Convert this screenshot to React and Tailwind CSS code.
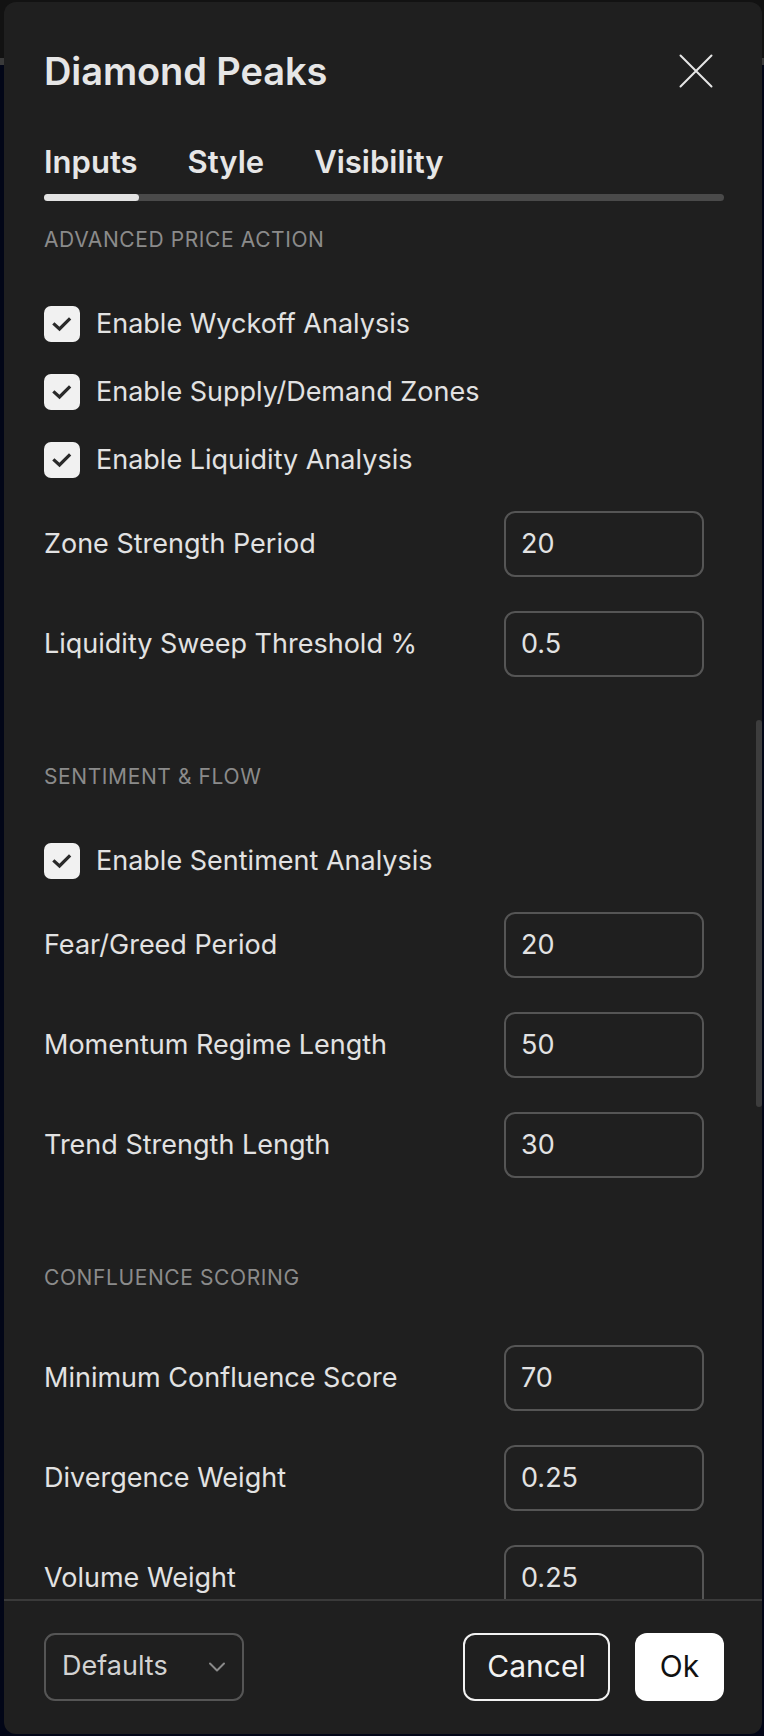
import React from "react";

function Check() {
  return (
    <div className="w-[36px] h-[36px] rounded-[7px] bg-[#f1f1f1] flex items-center justify-center shrink-0">
      <svg width="24" height="24" viewBox="0 0 24 24" fill="none">
        <path d="M4.5 12.5 L9.5 17 L19 7.5" stroke="#2a2a2a" strokeWidth="3.2" strokeLinecap="square" strokeLinejoin="miter" />
      </svg>
    </div>
  );
}

function CheckRow({ label }) {
  return (
    <div className="h-[68px] flex items-center gap-[16px]">
      <Check />
      <span className="text-[27px] text-[#e2e2e2]">{label}</span>
    </div>
  );
}

function InputRow({ label, value }) {
  return (
    <div className="h-[100px] flex items-center justify-between pr-[58px]">
      <span className="text-[27px] text-[#e2e2e2]">{label}</span>
      <div className="w-[200px] h-[66px] rounded-[11px] border-[2px] border-[#555555] flex items-center pl-[15px] text-[27px] text-[#e2e2e2]">
        {value}
      </div>
    </div>
  );
}

function Section({ title, first, children }) {
  return (
    <div className={first ? "" : "mt-[44px]"}>
      <div className="h-[77px] flex items-center text-[21px] text-[#8b8b8b] tracking-[0.6px]">{title}</div>
      <div className="mt-[12px]">{children}</div>
    </div>
  );
}

export default function App() {
  return (
    <div
      className="w-[764px] h-[1736px] pt-[2px] pl-[4px] pr-[2px] bg-[linear-gradient(to_bottom,#121212_0,#121212_58px,#3a3a3a_58px,#3a3a3a_65px,#020617_65px)] overflow-hidden"
      style={{ fontFamily: "Inter, 'Noto Sans', 'Liberation Sans', sans-serif" }}
    >
      <div className="relative h-[1732px] rounded-[12px] bg-[#1f1f1f] flex flex-col overflow-hidden">
        {/* Header */}
        <div className="pl-[40px] pr-[38px] pt-[45px]">
          <div className="h-[48px] flex items-center justify-between">
            <h1 className="text-[38px] font-semibold text-[#e6e6e6] tracking-[-0.1px]">Diamond Peaks</h1>
            <svg width="34" height="34" viewBox="0 0 34 34" fill="none" className="mr-[11px]">
              <path d="M1.5 1.5 L32.5 32.5 M32.5 1.5 L1.5 32.5" stroke="#e6e6e6" strokeWidth="2" strokeLinecap="round" />
            </svg>
          </div>
          <div className="mt-[47px] h-[40px] flex items-center gap-[50px] text-[31px] font-semibold text-[#e6e6e6]">
            <span>Inputs</span>
            <span>Style</span>
            <span>Visibility</span>
          </div>
          <div className="mt-[12px] h-[7px] rounded-full bg-[#4a4a4a] flex">
            <div className="w-[95px] h-[7px] rounded-full bg-[#e2e2e2]" />
          </div>
        </div>

        {/* Scroll content */}
        <div className="relative h-[1398px] overflow-hidden pl-[40px]">
          <Section title="ADVANCED PRICE ACTION" first>
            <CheckRow label="Enable Wyckoff Analysis" />
            <CheckRow label="Enable Supply/Demand Zones" />
            <CheckRow label="Enable Liquidity Analysis" />
            <InputRow label="Zone Strength Period" value="20" />
            <InputRow label="Liquidity Sweep Threshold %" value="0.5" />
          </Section>
          <Section title="SENTIMENT & FLOW">
            <CheckRow label="Enable Sentiment Analysis" />
            <InputRow label="Fear/Greed Period" value="20" />
            <InputRow label="Momentum Regime Length" value="50" />
            <InputRow label="Trend Strength Length" value="30" />
          </Section>
          <Section title="CONFLUENCE SCORING">
            <InputRow label="Minimum Confluence Score" value="70" />
            <InputRow label="Divergence Weight" value="0.25" />
            <InputRow label="Volume Weight" value="0.25" />
          </Section>
          <div className="absolute right-[0px] top-[519px] w-[6px] h-[387px] rounded-full bg-[#3d3d3d]" />
        </div>

        {/* Footer */}
        <div className="border-t-[2px] border-[#3a3a3a] flex-1 pl-[40px] pr-[38px] flex items-center justify-between pb-[2px]">
          <div className="w-[200px] h-[68px] rounded-[11px] border-[2px] border-[#555555] flex items-center justify-between pl-[16px] pr-[16px]">
            <span className="text-[27px] text-[#d2d2d2]">Defaults</span>
            <svg width="18" height="12" viewBox="0 0 18 12" fill="none">
              <path d="M2 2.5 L9 9.5 L16 2.5" stroke="#8a8a8a" strokeWidth="2" strokeLinecap="round" strokeLinejoin="round" />
            </svg>
          </div>
          <div className="flex items-center gap-[25px]">
            <div className="w-[147px] h-[68px] rounded-[12px] border-[2px] border-[#f2f2f2] flex items-center justify-center text-[30px] text-[#f2f2f2]">
              Cancel
            </div>
            <div className="w-[89px] h-[68px] rounded-[12px] bg-[#ffffff] flex items-center justify-center text-[30px] text-[#111111]">
              Ok
            </div>
          </div>
        </div>
      </div>
    </div>
  );
}
